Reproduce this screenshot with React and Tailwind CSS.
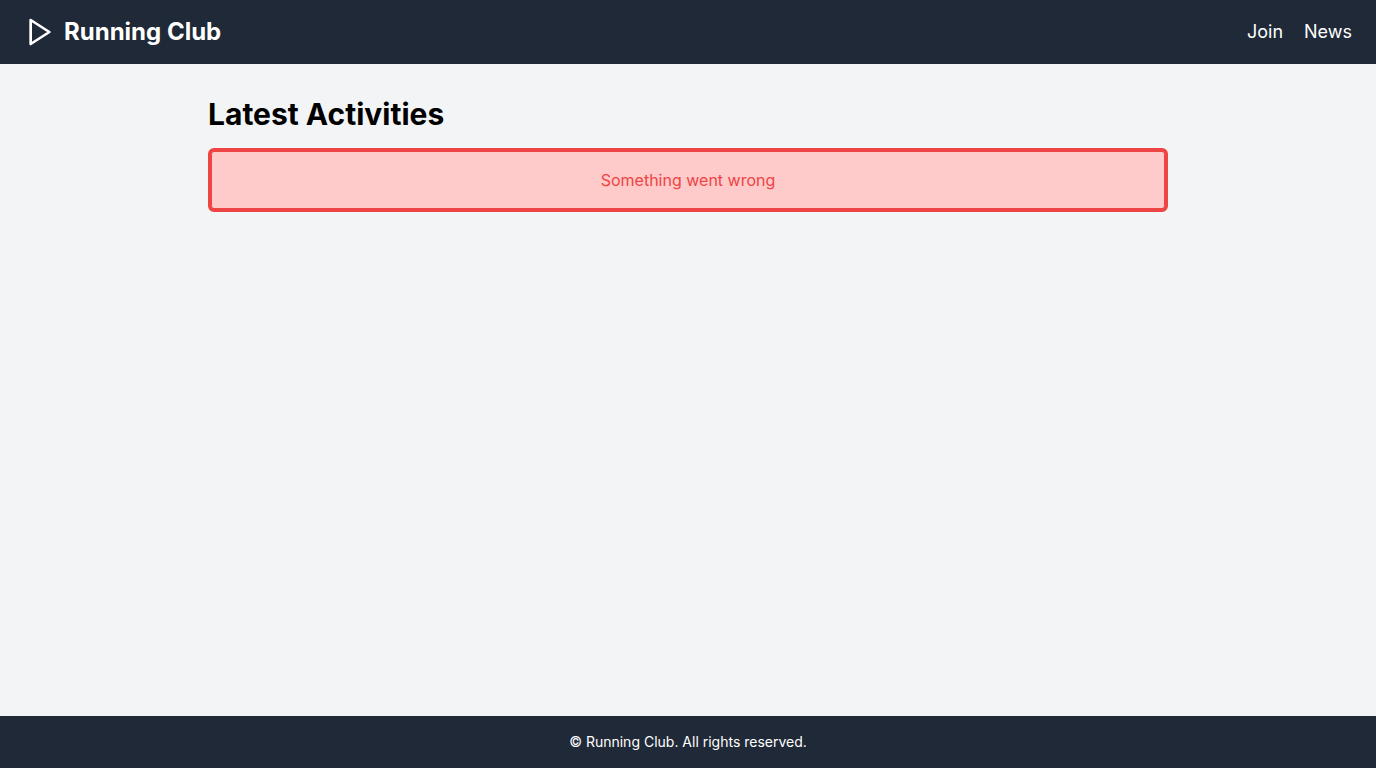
function PlayIcon() {
  return (
    <svg
      className="h-8 w-8"
      viewBox="0 0 24 24"
      fill="none"
      stroke="currentColor"
      strokeWidth="2"
      strokeLinecap="round"
      strokeLinejoin="round"
      aria-hidden="true"
    >
      <polygon points="5 3 19 12 5 21 5 3" />
    </svg>
  );
}

export default function App() {
  return (
    <div className="flex min-h-screen flex-col bg-gray-100 font-[Inter,sans-serif] text-black">
      <header className="flex items-center justify-between bg-[#1f2937] px-6 py-4 text-white">
        <a href="#home" className="flex items-center gap-2 text-2xl font-bold">
          <PlayIcon />
          <span>Running Club</span>
        </a>
        <nav className="flex gap-[21px] text-lg">
          <a href="#join">Join</a>
          <a href="#news">News</a>
        </nav>
      </header>
      <main className="mx-auto w-full max-w-5xl grow p-8">
        <h1 className="mb-4 text-3xl font-bold">Latest Activities</h1>
        <div
          role="alert"
          className="rounded-md border-4 border-[#ef4444] bg-[#fecaca] p-4 text-center text-[#ef4444]"
        >
          Something went wrong
        </div>
      </main>
      <footer className="bg-[#1f2937] p-4 text-center text-sm text-white">
        © Running Club. All rights reserved.
      </footer>
    </div>
  );
}
